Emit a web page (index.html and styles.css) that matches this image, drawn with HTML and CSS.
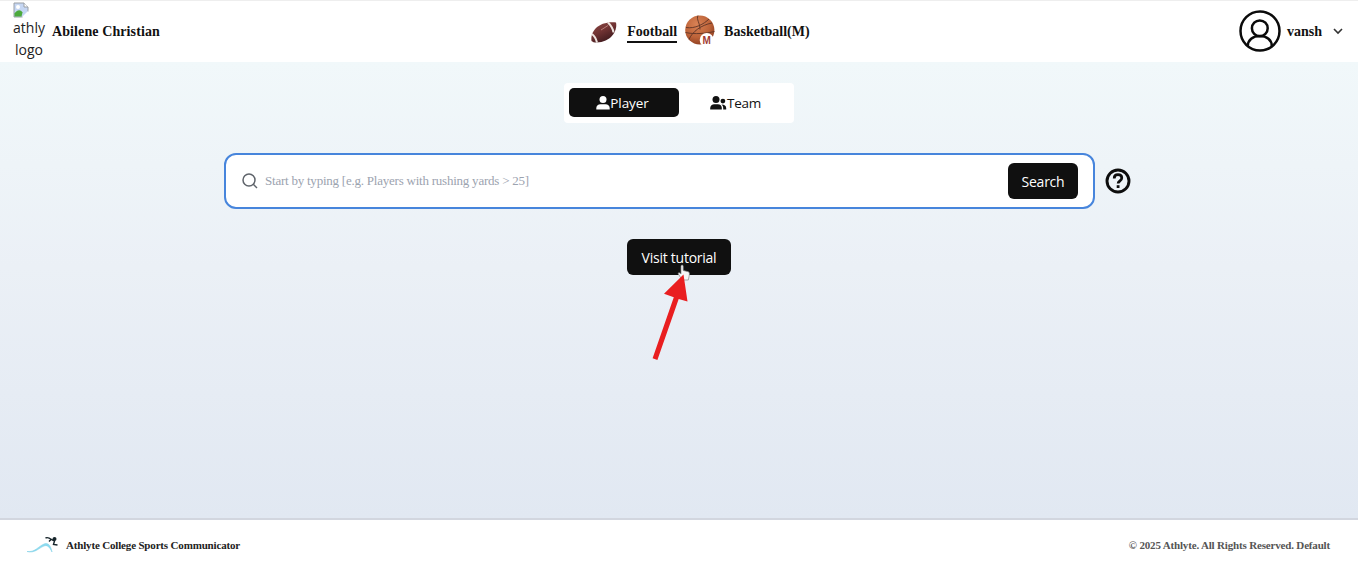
FILE: index.html
```html
<!DOCTYPE html>
<html lang="en">
<head>
<meta charset="utf-8">
<title>Athlyte College Sports Communicator</title>
<link rel="stylesheet" href="styles.css">
</head>
<body>
<header class="header">
  <div class="brand">
    <div class="brand-logo">
      <svg class="broken" width="16" height="16" viewBox="0 0 16 16"><path d="M1 1h10l4 4v5l-5 5H1z" fill="#c5d6f3" stroke="#9a9fa5"/><path d="M11 1v4h4" fill="#fff" stroke="#9a9fa5"/><circle cx="5" cy="5" r="2" fill="#fff"/><path d="M1.500 14.500v-3c3-4 6-4 8-1l-1 4z" fill="#4caa3c"/><path d="M8.500 15.500 15.500 8.500v7z" fill="#fff"/></svg>
      <span class="logo-line athly">athly</span>
      <span class="logo-line logo">logo</span>
    </div>
    <span class="brand-name">Abilene Christian</span>
  </div>
  <nav class="sports">
    <svg class="football" width="28" height="24" viewBox="0 0 28 24">
      <defs><linearGradient id="fb" x1="0" y1="0" x2="0.600" y2="1"><stop offset="0" stop-color="#8c4944"/><stop offset=".5" stop-color="#713333"/><stop offset="1" stop-color="#3d191d"/></linearGradient></defs>
      <path d="M1.500 21C0 11 9 1 26 2.500 28 12 19 24 3.500 22.200z" fill="url(#fb)"/>
      <path d="M2 14c2 1.500 4 4.500 5 8.500M18 2.500c2 2 5 6 5.500 10" fill="none" stroke="#eee4df" stroke-width="2"/>
      <path d="m11 10 7-4.500" stroke="#b77d77" stroke-width="1" fill="none"/>
    </svg>
    <span class="sport active">Football</span>
    <svg class="basketball" width="30" height="31" viewBox="0 0 30 31">
      <defs><radialGradient id="bb" cx=".4" cy=".3" r=".75"><stop offset="0" stop-color="#d98255"/><stop offset=".6" stop-color="#bd6339"/><stop offset="1" stop-color="#8b3c20"/></radialGradient></defs>
      <circle cx="14.800" cy="15" r="14.600" fill="url(#bb)"/>
      <path d="M1 12.500C10 14 19 9 24 4M0.500 17.500c9 2 20 1 29-1M13 .5c-2 4 2 7 2 14M4 24.500C7 17 16 10 27 8" fill="none" stroke="#5d3326" stroke-width=".9"/>
      <circle cx="21.700" cy="25" r="7" fill="#fff"/>
      <text class="badge-letter" x="21.700" y="29.300" text-anchor="middle">M</text>
    </svg>
    <span class="sport">Basketball(M)</span>
  </nav>
  <div class="user">
    <svg width="42" height="42" viewBox="0 0 42 42" fill="none" stroke="#0b0b0b" stroke-width="2.500"><circle cx="21" cy="21" r="19.500"/><circle cx="20.800" cy="18.300" r="7.900"/><path d="M8.800 36c0-6 5-10 12-10s12 4 12 10"/></svg>
    <span class="user-name">vansh</span>
    <svg class="chevron" width="10" height="7" viewBox="0 0 10 7"><path d="m1 1 4 4 4-4" fill="none" stroke="#333" stroke-width="1.600"/></svg>
  </div>
</header>
<main class="main">
  <div class="tabs">
    <div class="tab selected"><svg width="14" height="14" viewBox="0 0 14 14" fill="#fff"><circle cx="7" cy="3.600" r="3.500"/><path d="M.3 13.500V12c0-2.500 2-3.800 4-3.800h5.400c2 0 4 1.300 4 3.800v1.500z"/></svg><span>Player</span></div>
    <div class="tab team"><svg width="17" height="14" viewBox="0 0 17 14" fill="#111"><circle cx="6" cy="3.600" r="3.500"/><path d="M.2 13.500V12c0-2.500 2-3.800 4-3.800h3.600c2.500 0 4 1.300 4 3.800v1.500z"/><circle cx="12.900" cy="5.100" r="2.400"/><path d="M11.500 8.500c3 0 4.700 1.300 4.700 3.500v1.500h-3V12c0-1.600-.6-2.700-1.700-3.500z"/></svg><span>Team</span></div>
  </div>
  <div class="search-row">
    <div class="search-box">
      <svg width="16" height="16" viewBox="0 0 16 16" fill="none" stroke="#5f646b" stroke-width="1.500"><circle cx="7" cy="7" r="6"/><path d="m11.300 11.300 3.700 3.700"/></svg>
      <span class="placeholder">Start by typing [e.g. Players with rushing yards &gt; 25]</span>
      <button class="button search-button">Search</button>
    </div>
    <svg class="help" width="26" height="26" viewBox="0 0 26 26" fill="none" stroke="#0d0d0d"><circle cx="13" cy="13" r="11" stroke-width="2.900"/><path d="M9.200 10.400c0-2.300 1.500-3.700 3.800-3.700s3.800 1.400 3.800 3.300c0 2.800-3.700 2.800-3.700 5.500" stroke-width="2.700"/><path d="M11.700 17.200h2.800v2.800h-2.800z" fill="#0d0d0d" stroke="none"/></svg>
  </div>
  <div class="tutorial">
    <button class="button tutorial-button">Visit tutorial</button>
    <svg class="pointer" width="40" height="98" viewBox="0 0 40 98">
      <path d="M31 4.500c0-2 2.200-2 2.200 0v4l5 1.200c1.400.4 1.400 2 .9 4.500l-.8 3.800h-6l-4-6c-.4-1.500 1.200-1.800 2.700 0z" fill="#f6f6f6" stroke="#888" stroke-width=".7"/>
      <path d="M33.500 12.500 37.500 39.500 28.700 36.900 7.400 98 2.600 96.300 23.800 35.200 14 31.800z" fill="#e91e20"/>
    </svg>
  </div>
</main>
<footer class="footer">
  <div class="footer-brand">
    <svg width="32" height="18" viewBox="0 0 32 18" fill="none"><path d="M0 15.500c8 1 11-5 17-7.500 5-2 7 3 8 8-2-4-4-7.500-8-6-6 2.500-9 7.500-17 5.500z" fill="#8edcf0" stroke="#78cde5" stroke-width=".5"/><path d="M18.500 2c2-1 4 0 6 1.500l3 1.500-1 3.500 4 .5M24 3.500l-2 2" stroke="#17252b" stroke-width="1.400"/><circle cx="27.500" cy="3" r="2" fill="#17252b"/></svg>
    <span>Athlyte College Sports Communicator</span>
  </div>
  <span class="copyright">© 2025 Athlyte. All Rights Reserved. Default</span>
</footer>
</body>
</html>
```
FILE: styles.css
```css
* { box-sizing: border-box; }
body {
  margin: 0;
  height: 567px;
  display: flex;
  flex-direction: column;
  overflow: hidden;
  font-family: "Open Sans", "Noto Sans", sans-serif;
  color: #111;
}
svg { display: block; flex: none; }
.header {
  height: 62px;
  flex: none;
  display: flex;
  justify-content: space-between;
  padding: 0 15px 0 13px;
  border-top: 1px solid #eee;
  background: #fff;
  font: bold 14px "Liberation Serif", serif;
  white-space: nowrap;
}
.brand, .sports, .user, .footer-brand { display: flex; align-items: center; }
.brand-logo {
  width: 32px;
  height: 61px;
  margin-right: 7px;
  padding-top: 1px;
  font: 14px/22px "Open Sans", sans-serif;
  color: #222;
}
.logo-line { display: block; text-align: center; }
.athly { line-height: 19px; }
.logo { line-height: 25px; }
.brand-name { width: 107px; letter-spacing: .1px; }
.sports { padding-left: 2px; }
.sport { line-height: 19px; }
.football { margin-right: 9px; }
.active { border-bottom: 2px solid #111; margin: 2px 8px 0 0; line-height: 19px; }
.basketball { margin: -2px 9px 0 0; }
.badge-letter { font: bold 10px "Liberation Sans", sans-serif; fill: #a13b32; }
.user > svg:first-child { margin-top: -1px; }
.user-name { margin: 0 11px 0 6px; }
.main {
  flex: 1;
  display: flex;
  flex-direction: column;
  align-items: center;
  padding-top: 21px;
  background: linear-gradient(#f1f8fa, #ebf0f6 45%, #e1e8f2);
}
.tabs {
  display: flex;
  width: 230px;
  height: 40px;
  padding: 5px;
  background: #fff;
  border-radius: 4px;
}
.tab {
  width: 110px;
  height: 29px;
  display: flex;
  align-items: center;
  justify-content: center;
  border-radius: 5px;
  font-size: 13.5px;
  letter-spacing: -.1px;
}
.tab.selected { background: #101010; color: #fff; padding-right: 3px; }
.team { padding-left: 3px; letter-spacing: -.3px; }
.search-row {
  display: flex;
  align-items: center;
  margin: 30px 3px 0 0;
  gap: 10px;
}
.search-box {
  width: 871px;
  height: 56px;
  display: flex;
  align-items: center;
  padding: 0 15px 0 16px;
  border: 2px solid #4785dc;
  border-radius: 12px;
  background: #fff;
}
.placeholder {
  flex: 1;
  margin-left: 7px;
  font: 13px "Liberation Serif", serif;
  letter-spacing: -.23px;
  color: #9ca3af;
}
.button {
  height: 36px;
  padding: 0;
  border: 0;
  border-radius: 6px;
  background: #101010;
  color: #fff;
  font: 14px "Open Sans", sans-serif;
  letter-spacing: -.25px;
}
.search-button { width: 70px; }
.tutorial { position: relative; margin-top: 30px; }
.tutorial-button { width: 104px; }
.pointer { position: absolute; left: 23px; top: 23px; }
.footer {
  height: 49px;
  flex: none;
  display: flex;
  align-items: center;
  justify-content: space-between;
  padding: 2px 28px 0 27px;
  border-top: 2px solid #d2d6df;
  background: #fff;
  font: bold 11px "Liberation Serif", serif;
  letter-spacing: -.17px;
}
.footer-brand { gap: 7px; color: #222; }
.copyright { color: #555; }
```
